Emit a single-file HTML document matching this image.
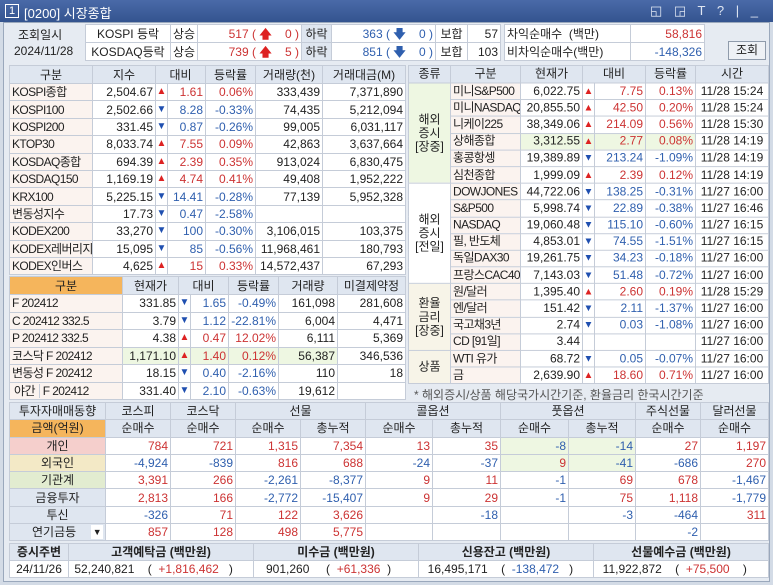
<!DOCTYPE html><html><head><meta charset="utf-8"><style>
*{margin:0;padding:0;box-sizing:border-box}
body{width:773px;height:585px;background:#d3dbe6;font-family:"Liberation Sans","Noto Sans CJK KR",sans-serif;font-size:12px;color:#222;position:relative;overflow:hidden}
.tb{position:absolute;left:0;top:0;width:773px;height:22px;background:linear-gradient(#4a6aa8,#34548f);color:#fff;font-size:13px}
.main{position:absolute;left:3px;top:22px;width:767px;height:560px;background:#e6ebf2;border:1px solid #9aa8bc}
table{position:absolute;border-collapse:collapse;table-layout:fixed;background:#fff}
td{border:1px solid #c5ccd8;white-space:nowrap;overflow:hidden;padding:0 2px;text-align:right;line-height:14px}
.h td,td.h{background:#dfe6f0;text-align:center}
.l{text-align:left}.c{text-align:center}
.r{color:#cc3333}.b{color:#2f5fae}
.au{color:#dd2222;text-align:center;padding:0;font-size:10px}
.ad{color:#1f4fb0;text-align:center;padding:0;font-size:10px}
.pk{background:#fbf3ef;letter-spacing:-0.6px}
.gr{background:#eef7e2}
.or{background:#f5b55c!important}
#rt{transform:scaleY(0.9725);transform-origin:0 0}
#rt tr{height:17.2px}
#rt td{line-height:11px;padding-top:0;padding-bottom:0}
#rt td.m{line-height:14px}
</style></head><body>
<div class="tb"><span style="position:absolute;left:5px;top:4px;width:14px;height:14px;border:1px solid #fff;font-size:11px;line-height:12px;text-align:center">1</span><span style="position:absolute;left:24px;top:3px">[0200] 시장종합</span><span style="position:absolute;left:650px;top:3px;letter-spacing:4px;color:#dfe6f2">◱ ◲ T ? | _ □ ×</span></div>
<div class="main"></div>
<div style="position:absolute;left:18px;top:26px;font-size:12px">조회일시</div>
<div style="position:absolute;left:14px;top:44px;font-size:12px">2024/11/28</div>
<table style="left:85px;top:24px;width:415px">
<colgroup><col style="width:85px"><col style="width:27px"><col style="width:104px"><col style="width:30px"><col style="width:104px"><col style="width:32px"><col style="width:33px"></colgroup>
<tr style="height:18px"><td class="c">KOSPI 등락</td><td class="c">상승</td><td class="r">517 ( <b style="color:#d22">🡅</b> &nbsp; &nbsp;0 )</td><td class="c h">하락</td><td class="b">363 ( <b>🡇</b> &nbsp; &nbsp;0 )</td><td class="c">보합</td><td>57</td></tr>
<tr style="height:18px"><td class="c">KOSDAQ등락</td><td class="c">상승</td><td class="r">739 ( <b style="color:#d22">🡅</b> &nbsp; &nbsp;5 )</td><td class="c h">하락</td><td class="b">851 ( <b>🡇</b> &nbsp; &nbsp;0 )</td><td class="c">보합</td><td>103</td></tr></table>
<table style="left:504px;top:24px;width:200px"><colgroup><col style="width:126px"><col style="width:74px"></colgroup>
<tr style="height:18px"><td class="l">차익순매수 &nbsp;(백만)</td><td class="r">58,816</td></tr>
<tr style="height:18px"><td class="l">비차익순매수(백만)</td><td class="b">-148,326</td></tr></table>
<div style="position:absolute;left:728px;top:41px;width:38px;height:19px;border:1px solid #8f9bab;background:#eef1f5;text-align:center;line-height:17px">조회</div>

<table style="left:9px;top:65px;width:396px">
<colgroup><col style="width:83px"><col style="width:63px"><col style="width:12px"><col style="width:38px"><col style="width:50px"><col style="width:67px"><col style="width:83px"></colgroup>
<tr class="h" style="height:18px"><td>구분</td><td>지수</td><td colspan="2">대비</td><td>등락률</td><td>거래량(천)</td><td>거래대금(M)</td></tr>
<tr style="height:17.4px"><td class="l pk">KOSPI종합</td><td>2,504.67</td><td class="au">▲</td><td class="r">1.61</td><td class="r">0.06%</td><td>333,439</td><td>7,371,890</td></tr>
<tr style="height:17.4px"><td class="l pk">KOSPI100</td><td>2,502.66</td><td class="ad">▼</td><td class="b">8.28</td><td class="b">-0.33%</td><td>74,435</td><td>5,212,094</td></tr>
<tr style="height:17.4px"><td class="l pk">KOSPI200</td><td>331.45</td><td class="ad">▼</td><td class="b">0.87</td><td class="b">-0.26%</td><td>99,005</td><td>6,031,117</td></tr>
<tr style="height:17.4px"><td class="l pk">KTOP30</td><td>8,033.74</td><td class="au">▲</td><td class="r">7.55</td><td class="r">0.09%</td><td>42,863</td><td>3,637,664</td></tr>
<tr style="height:17.4px"><td class="l pk">KOSDAQ종합</td><td>694.39</td><td class="au">▲</td><td class="r">2.39</td><td class="r">0.35%</td><td>913,024</td><td>6,830,475</td></tr>
<tr style="height:17.4px"><td class="l pk">KOSDAQ150</td><td>1,169.19</td><td class="au">▲</td><td class="r">4.74</td><td class="r">0.41%</td><td>49,408</td><td>1,952,222</td></tr>
<tr style="height:17.4px"><td class="l pk">KRX100</td><td>5,225.15</td><td class="ad">▼</td><td class="b">14.41</td><td class="b">-0.28%</td><td>77,139</td><td>5,952,328</td></tr>
<tr style="height:17.4px"><td class="l pk">변동성지수</td><td>17.73</td><td class="ad">▼</td><td class="b">0.47</td><td class="b">-2.58%</td><td></td><td></td></tr>
<tr style="height:17.4px"><td class="l pk">KODEX200</td><td>33,270</td><td class="ad">▼</td><td class="b">100</td><td class="b">-0.30%</td><td>3,106,015</td><td>103,375</td></tr>
<tr style="height:17.4px"><td class="l pk">KODEX레버리지</td><td>15,095</td><td class="ad">▼</td><td class="b">85</td><td class="b">-0.56%</td><td>11,968,461</td><td>180,793</td></tr>
<tr style="height:17.4px"><td class="l pk">KODEX인버스</td><td>4,625</td><td class="au">▲</td><td class="r">15</td><td class="r">0.33%</td><td>14,572,437</td><td>67,293</td></tr>
</table>

<table style="left:9px;top:276px;width:396px">
<colgroup><col style="width:113px"><col style="width:56px"><col style="width:12px"><col style="width:38px"><col style="width:50px"><col style="width:59px"><col style="width:68px"></colgroup>
<tr class="h" style="height:18px"><td class="or">구분</td><td>현재가</td><td colspan="2">대비</td><td>등락률</td><td>거래량</td><td>미결제약정</td></tr>
<tr style="height:17.5px"><td class="l pk">F 202412</td><td>331.85</td><td class="ad">▼</td><td class="b">1.65</td><td class="b">-0.49%</td><td>161,098</td><td>281,608</td></tr>
<tr style="height:17.5px"><td class="l pk">C 202412 332.5</td><td>3.79</td><td class="ad">▼</td><td class="b">1.12</td><td class="b">-22.81%</td><td>6,004</td><td>4,471</td></tr>
<tr style="height:17.5px"><td class="l pk">P 202412 332.5</td><td>4.38</td><td class="au">▲</td><td class="r">0.47</td><td class="r">12.02%</td><td>6,111</td><td>5,369</td></tr>
<tr style="height:17.5px"><td class="l pk">코스닥 F 202412</td><td class="gr">1,171.10</td><td class="au gr">▲</td><td class="r gr">1.40</td><td class="r gr">0.12%</td><td class="gr">56,387</td><td>346,536</td></tr>
<tr style="height:17.5px"><td class="l pk">변동성 F 202412</td><td>18.15</td><td class="ad">▼</td><td class="b">0.40</td><td class="b">-2.16%</td><td>110</td><td>18</td></tr>
<tr style="height:17.5px"><td class="l pk" style="padding:0"><span style="display:inline-block;width:30px;text-align:center;border-right:1px solid #c5ccd8">야간</span> F 202412</td><td>331.40</td><td class="ad">▼</td><td class="b">2.10</td><td class="b">-0.63%</td><td>19,612</td><td></td></tr>
</table>

<table id="rt" style="left:408px;top:65px;width:360px">
<colgroup><col style="width:42px"><col style="width:70px"><col style="width:62px"><col style="width:12px"><col style="width:51px"><col style="width:50px"><col style="width:73px"></colgroup>
<tr class="h" style="height:18px"><td>종류</td><td>구분</td><td>현재가</td><td colspan="2">대비</td><td>등락률</td><td>시간</td></tr>
<tr><td rowspan="6" class="c gr m">해외<br>증시<br>[장중]</td><td class="l pk">미니S&amp;P500</td><td>6,022.75</td><td class="au">▲</td><td class="r">7.75</td><td class="r">0.13%</td><td class="c">11/28 15:24</td></tr>
<tr><td class="l pk">미니NASDAQ</td><td>20,855.50</td><td class="au">▲</td><td class="r">42.50</td><td class="r">0.20%</td><td class="c">11/28 15:24</td></tr>
<tr><td class="l pk">니케이225</td><td>38,349.06</td><td class="au">▲</td><td class="r">214.09</td><td class="r">0.56%</td><td class="c">11/28 15:30</td></tr>
<tr><td class="l pk">상해종합</td><td class="gr">3,312.55</td><td class="au gr">▲</td><td class="r gr">2.77</td><td class="r gr">0.08%</td><td class="c">11/28 14:19</td></tr>
<tr><td class="l pk">홍콩항셍</td><td>19,389.89</td><td class="ad">▼</td><td class="b">213.24</td><td class="b">-1.09%</td><td class="c">11/28 14:19</td></tr>
<tr><td class="l pk">심천종합</td><td>1,999.09</td><td class="au">▲</td><td class="r">2.39</td><td class="r">0.12%</td><td class="c">11/28 14:19</td></tr>
<tr><td rowspan="6" class="c m">해외<br>증시<br>[전일]</td><td class="l pk">DOWJONES</td><td>44,722.06</td><td class="ad">▼</td><td class="b">138.25</td><td class="b">-0.31%</td><td class="c">11/27 16:00</td></tr>
<tr><td class="l pk">S&amp;P500</td><td>5,998.74</td><td class="ad">▼</td><td class="b">22.89</td><td class="b">-0.38%</td><td class="c">11/27 16:46</td></tr>
<tr><td class="l pk">NASDAQ</td><td>19,060.48</td><td class="ad">▼</td><td class="b">115.10</td><td class="b">-0.60%</td><td class="c">11/27 16:15</td></tr>
<tr><td class="l pk">필, 반도체</td><td>4,853.01</td><td class="ad">▼</td><td class="b">74.55</td><td class="b">-1.51%</td><td class="c">11/27 16:15</td></tr>
<tr><td class="l pk">독일DAX30</td><td>19,261.75</td><td class="ad">▼</td><td class="b">34.23</td><td class="b">-0.18%</td><td class="c">11/27 16:00</td></tr>
<tr><td class="l pk">프랑스CAC40</td><td>7,143.03</td><td class="ad">▼</td><td class="b">51.48</td><td class="b">-0.72%</td><td class="c">11/27 16:00</td></tr>
<tr><td rowspan="4" class="c m" style="background:#f7f4e8">환율<br>금리<br>[장중]</td><td class="l pk">원/달러</td><td>1,395.40</td><td class="au">▲</td><td class="r">2.60</td><td class="r">0.19%</td><td class="c">11/28 15:29</td></tr>
<tr><td class="l pk">엔/달러</td><td>151.42</td><td class="ad">▼</td><td class="b">2.11</td><td class="b">-1.37%</td><td class="c">11/27 16:00</td></tr>
<tr><td class="l pk">국고채3년</td><td>2.74</td><td class="ad">▼</td><td class="b">0.03</td><td class="b">-1.08%</td><td class="c">11/27 16:00</td></tr>
<tr><td class="l pk">CD [91일]</td><td>3.44</td><td></td><td></td><td></td><td class="c">11/27 16:00</td></tr>
<tr><td rowspan="2" class="c" style="background:#f7f4e8">상품</td><td class="l pk">WTI 유가</td><td>68.72</td><td class="ad">▼</td><td class="b">0.05</td><td class="b">-0.07%</td><td class="c">11/27 16:00</td></tr>
<tr><td class="l pk">금</td><td>2,639.90</td><td class="au">▲</td><td class="r">18.60</td><td class="r">0.71%</td><td class="c">11/27 16:00</td></tr>
</table>
<div style="position:absolute;left:414px;top:386px;color:#555">* 해외증시/상품 해당국가시간기준, 환율금리 한국시간기준</div>

<table style="left:9px;top:402px;width:759px">
<colgroup><col style="width:96px"><col style="width:65px"><col style="width:65px"><col style="width:65px"><col style="width:65px"><col style="width:67px"><col style="width:68px"><col style="width:68px"><col style="width:67px"><col style="width:65px"><col style="width:68px"></colgroup>
<tr class="h" style="height:17.3px"><td>투자자매매동향</td><td>코스피</td><td>코스닥</td><td colspan="2">선물</td><td colspan="2">콜옵션</td><td colspan="2">풋옵션</td><td>주식선물</td><td>달러선물</td></tr>
<tr class="h" style="height:17.3px"><td class="or">금액(억원)</td><td>순매수</td><td>순매수</td><td>순매수</td><td>총누적</td><td>순매수</td><td>총누적</td><td>순매수</td><td>총누적</td><td>순매수</td><td>순매수</td></tr>
<tr style="height:17.3px"><td class="c" style="background:#f5cfcc">개인</td><td class="r">784</td><td class="r">721</td><td class="r">1,315</td><td class="r">7,354</td><td class="r">13</td><td class="r">35</td><td class="b gr">-8</td><td class="b gr">-14</td><td class="r">27</td><td class="r">1,197</td></tr>
<tr style="height:17.3px"><td class="c" style="background:#f3e9c6">외국인</td><td class="b">-4,924</td><td class="b">-839</td><td class="r">816</td><td class="r">688</td><td class="b">-24</td><td class="b">-37</td><td class="r gr">9</td><td class="b gr">-41</td><td class="b">-686</td><td class="r">270</td></tr>
<tr style="height:17.3px"><td class="c" style="background:#e2ecd0">기관계</td><td class="r">3,391</td><td class="r">266</td><td class="b">-2,261</td><td class="b">-8,377</td><td class="r">9</td><td class="r">11</td><td class="b">-1</td><td class="r">69</td><td class="r">678</td><td class="b">-1,467</td></tr>
<tr style="height:17.3px"><td class="c h">금융투자</td><td class="r">2,813</td><td class="r">166</td><td class="b">-2,772</td><td class="b">-15,407</td><td class="r">9</td><td class="r">29</td><td class="b">-1</td><td class="r">75</td><td class="r">1,118</td><td class="b">-1,779</td></tr>
<tr style="height:17.3px"><td class="c h">투신</td><td class="b">-326</td><td class="r">71</td><td class="r">122</td><td class="r">3,626</td><td></td><td class="b">-18</td><td></td><td class="b">-3</td><td class="b">-464</td><td class="r">311</td></tr>
<tr style="height:17.3px"><td class="h" style="text-align:left;padding-left:22px">연기금등 <span style="position:absolute;margin-left:15px;background:#fff;width:12px;text-align:center;font-size:9px">▼</span></td><td class="r">857</td><td class="r">128</td><td class="r">498</td><td class="r">5,775</td><td></td><td></td><td></td><td></td><td class="b">-2</td><td></td></tr>
</table>

<table style="left:9px;top:543px;width:759px">
<colgroup><col style="width:59px"><col style="width:185px"><col style="width:165px"><col style="width:175px"><col style="width:175px"></colgroup>
<tr class="h" style="height:17px;font-weight:bold"><td>증시주변</td><td>고객예탁금 (백만원)</td><td>미수금 (백만원)</td><td>신용잔고 (백만원)</td><td>선물예수금 (백만원)</td></tr>
<tr style="height:17px"><td class="c">24/11/26</td>
<td class="l">&nbsp;52,240,821 &nbsp; &nbsp;( &nbsp;<span class="r">+1,816,462</span> &nbsp; )</td>
<td class="l">&nbsp; &nbsp;901,260 &nbsp; &nbsp; ( &nbsp;<span class="r">+61,336</span> &nbsp;)</td>
<td class="l">&nbsp; 16,495,171 &nbsp; &nbsp;( &nbsp;<span class="b">-138,472</span> &nbsp; )</td>
<td class="l">&nbsp; 11,922,872 &nbsp; &nbsp;( &nbsp;<span class="r">+75,500</span> &nbsp; &nbsp;)</td></tr>
</table>
</body></html>
